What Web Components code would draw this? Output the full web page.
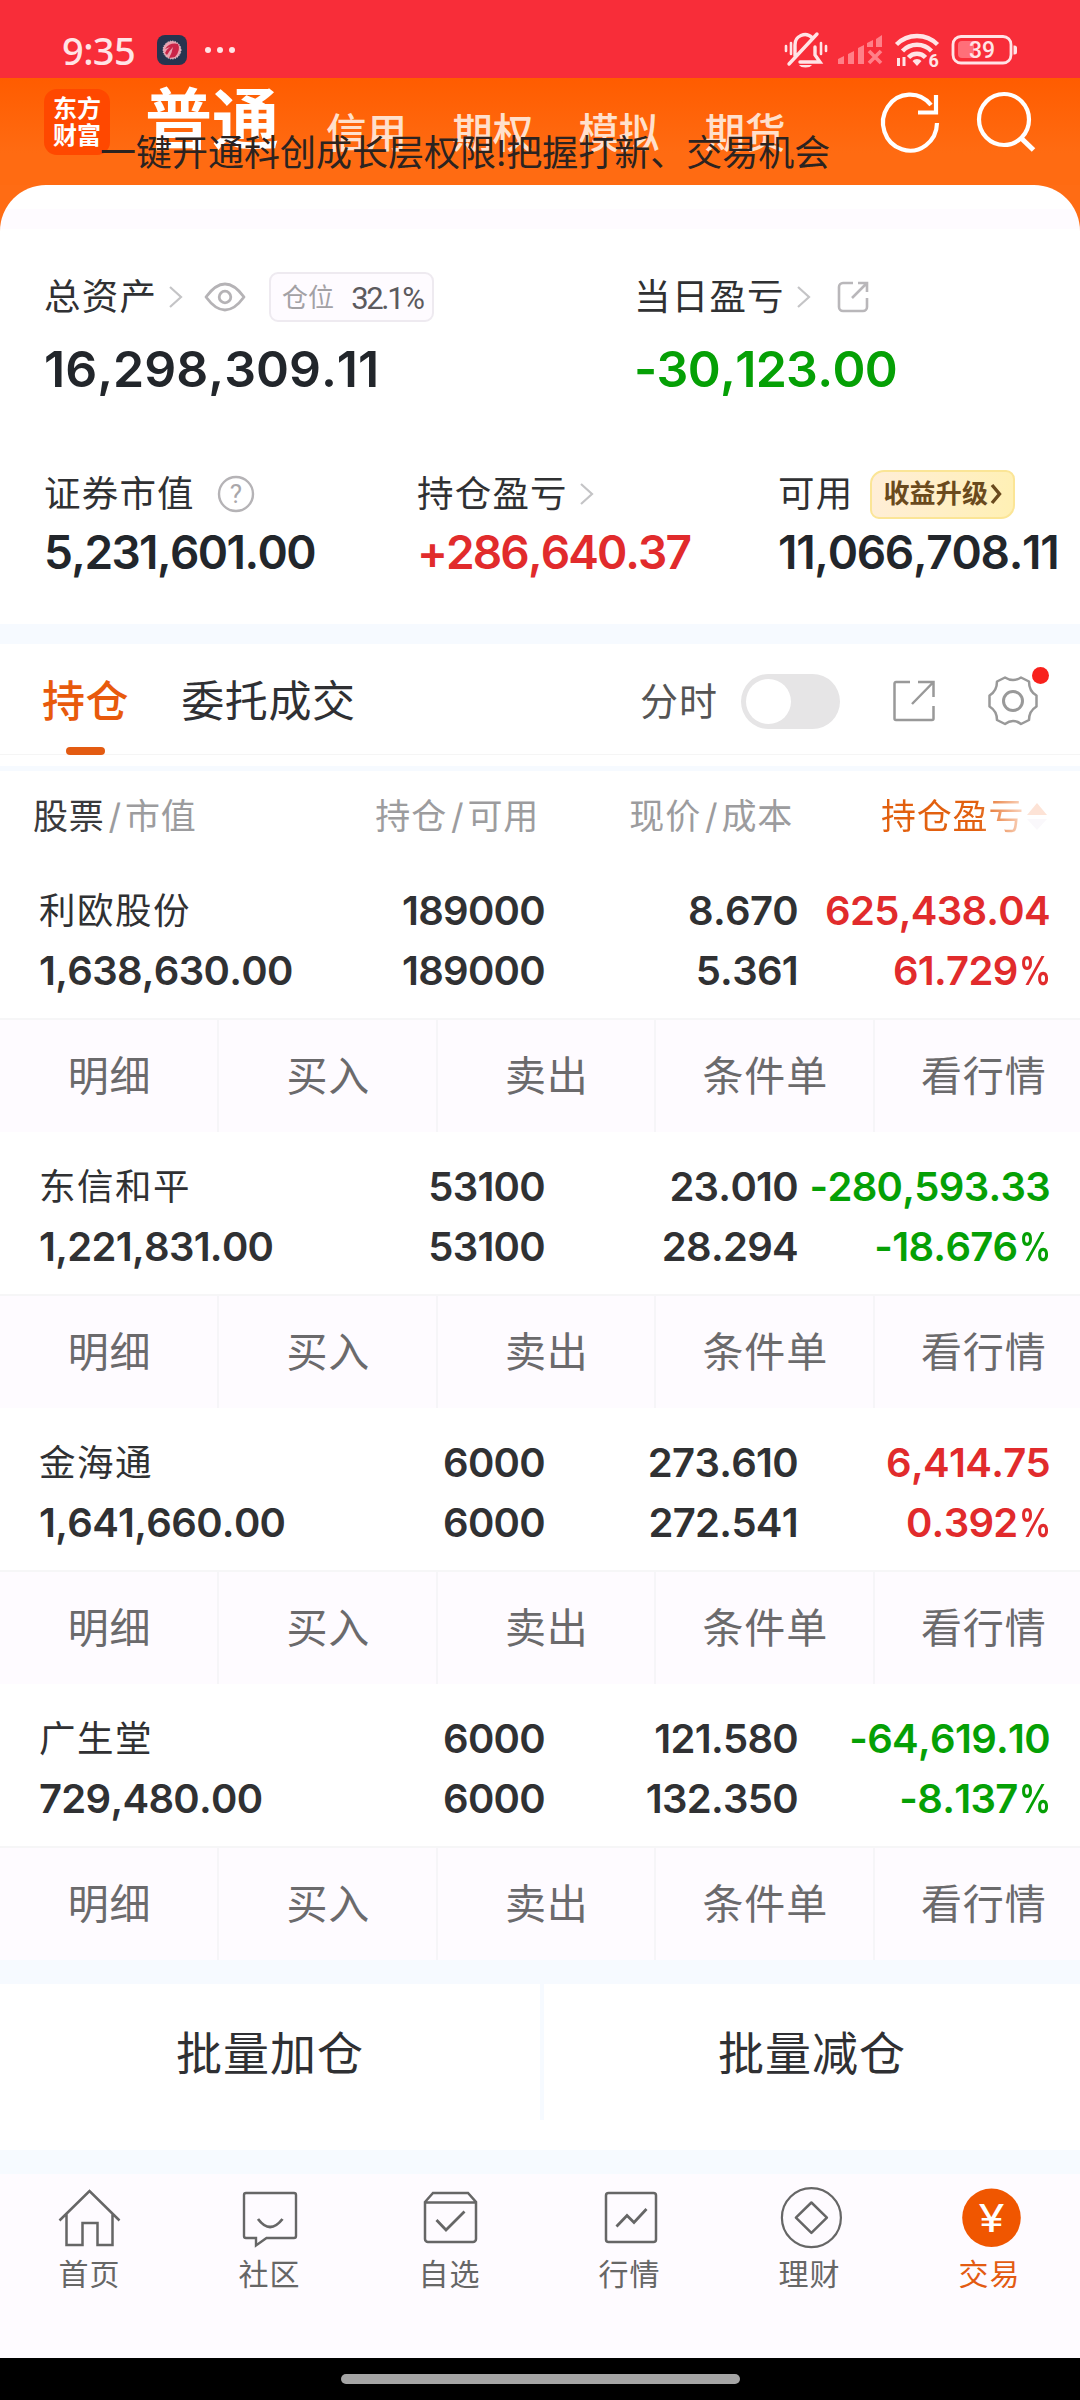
<!DOCTYPE html>
<html lang="zh-CN">
<head>
<meta charset="utf-8">
<title>交易</title>
<style>
  body {
    margin: 0;
    width: 1080px;
    height: 2400px;
    overflow: hidden;
    background: #fff;
    color: #2f3033;
    font-family: Inter, "Noto Sans CJK SC", sans-serif;
    line-height: 1;
  }
</style>
</head>
<body>
<trade-app></trade-app>

<script>
// every icon is drawn in its own viewBox, one unit per pixel
const ICONS = {
  mute: [44, 38, `<g fill="none" stroke="#ffe4e6" stroke-width="3.4" stroke-linecap="round">
    <path d="M11 25V14a10 10 0 0 1 17-7.500M31 16v8l5 7H16M5 33 33 3"/>
    <path d="M2 15v5M7 12v11M37 12v11M42 15v5" stroke-width="2.6"/></g>
    <path d="M15 34h13a7 4 0 0 1-13 0z" fill="#ffe4e6"/>`],
  signal: [46, 30, `<g fill="#ff8088"><path d="M1 29v-5l6-3v8zM11 29V19l6-3v13zM21 29V13l6-3v19zM30 12V8l6-3v7zM39 12V4l6-4v12z"/></g>
    <path d="M32 16 44 28M44 16 32 28" stroke="#ff8088" stroke-width="3.600"/>`],
  wifi: [44, 34, `<g fill="none" stroke="#ffe4e6" stroke-width="4.400">
    <path d="M1.500 11.500a29 29 0 0 1 41 0M7.500 18a20 20 0 0 1 29 0M13.500 24.500a11.500 11.500 0 0 1 17 0"/>
    <path d="M3.500 25v8M9 24v9" stroke-width="3"/></g>
    <path d="M17.500 28a6 6 0 0 1 9 0L22 33z" fill="#ffe4e6"/>
    <text x="33.500" y="33.500" font-size="18" font-weight="700" fill="#ffe4e6">6</text>`],
  battery: [68, 30, `<rect x="2" y="1.500" width="58" height="26.500" rx="8" fill="none" stroke="#ffe4e6" stroke-width="2.800"/>
    <path d="M11 6h12v17H11a4 4 0 0 1-4-4v-9a4 4 0 0 1 4-4z" fill="#ff6f79"/>
    <path d="M62.500 10.500h1a2.500 2.500 0 0 1 2.500 2.500v4a2.500 2.500 0 0 1-2.500 2.500h-1z" fill="#ffe4e6"/>
    <text x="31" y="22.500" font-size="23" font-weight="500" text-anchor="middle" fill="#ffe4e6">39</text>`],
  app: [30, 30, `<rect width="30" height="30" rx="8" fill="#26344f"/><circle cx="15" cy="15" r="9" fill="#e9a3b1" stroke="#f4dde4" stroke-width="1" stroke-dasharray="1 1.500"/>
    <path d="M8 14q5-7 13-5 3 6-3 13l-6 1q3-5 4-11-3 3-6 8l-2-2q2-4 5-6z" fill="#c92548"/>`],
  refresh: [60, 62, `<path d="M57 31A27 28 0 1 1 51 13M38 20.500H56V3" fill="none" stroke="#fff" stroke-width="4.200"/>`],
  search: [60, 62, `<ellipse cx="27" cy="27.500" rx="25" ry="25.500" fill="none" stroke="#fff" stroke-width="4.200"/><path d="m44 46 12.500 12" stroke="#fff" stroke-width="5"/>`],
  chevron: [16, 24, `<path d="m2 2 11 10L2 22" fill="none" stroke="#c4c4c6" stroke-width="2.200"/>`],
  more: [12, 22, `<path d="m2 2 7.500 9L2 20" fill="none" stroke="#6a4a1d" stroke-width="3.400"/>`],
  eye: [42, 30, `<g fill="none" stroke="#b5b3b6" stroke-width="2.800"><path d="M2 15Q21-11 40 15 21 41 2 15z" stroke-linejoin="round"/><circle cx="21" cy="15" r="5.800"/></g>`],
  help: [38, 38, `<circle cx="19" cy="19" r="17" fill="none" stroke="#b5b3b6" stroke-width="2.400"/>
    <text x="19" y="28" font-size="26" text-anchor="middle" fill="#a9a7aa">?</text>`],
  share: [34, 34, `<path d="M17 3H7a4 4 0 0 0-4 4v20a4 4 0 0 0 4 4h20a4 4 0 0 0 4-4V18M22 3h9v9M31 3 16 18" fill="none" stroke="#b9b7ba" stroke-width="2.600"/>`],
  export: [44, 44, `<path d="M18 3H4a1.500 1.500 0 0 0-1.500 1.500v35A1.500 1.500 0 0 0 4 41h36a1.500 1.500 0 0 0 1.500-1.500V27M26 3h15.500v15M41.500 3 20 25" fill="none" stroke="#999" stroke-width="2.500"/>`],
  gear: [52, 52, `<g fill="none" stroke="#999" stroke-width="2.500" stroke-linejoin="round">
    <path d="M18 2.500q8 5 16 0l8 4q0 10 7.500 14v11Q42 36 42 45l-8 4q-8-6-16 0l-8-4q0-9-7.500-13.500v-11Q10 16 10 6.500z"/><circle cx="26" cy="26" r="9.500" stroke-width="3"/></g>`],
  home: [64, 64, `<path d="M1.500 34.500 31.500 5l30 29.500M8.500 28v31h16V37h15v22h15V28" fill="none" stroke="#666" stroke-width="2.500"/>`],
  chat: [64, 64, `<path d="M8 7h48a2 2 0 0 1 2 2v41a2 2 0 0 1-2 2H28.500L18 59.500V52H8a2 2 0 0 1-2-2V9a2 2 0 0 1 2-2z" fill="none" stroke="#666" stroke-width="2.400"/>
    <path d="M20 33q12 16 24.500 0" fill="none" stroke="#666" stroke-width="2.800"/>`],
  watch: [64, 64, `<path d="M7 16 15 7h35l8 9v37a3 3 0 0 1-3 3H10a3 3 0 0 1-3-3zM7 16.500h51" fill="none" stroke="#666" stroke-width="2.500"/>
    <path d="m18.500 34 9.500 10 18.500-18.500" fill="none" stroke="#666" stroke-width="2.800"/>`],
  market: [64, 64, `<rect x="8" y="7" width="50" height="49" rx="2.500" fill="none" stroke="#666" stroke-width="2.500"/>
    <path d="m18.500 40.500 10.500-11 7 7 12.500-13.500" fill="none" stroke="#666" stroke-width="2.800"/>`],
  wealth: [64, 64, `<circle cx="33.400" cy="31.700" r="29.500" fill="none" stroke="#666" stroke-width="2.200"/>
    <path d="m33.400 16.500 15.500 15.200-15.500 15.200-15.500-15.200z" fill="none" stroke="#666" stroke-width="2.500" stroke-linejoin="round"/>`],
  trade: [64, 64, `<circle cx="33.500" cy="31.700" r="29.300" fill="#f05600"/>
    <text x="20.500" y="46" font-size="38" font-family="Inter" font-weight="400" textLength="26" lengthAdjust="spacingAndGlyphs" fill="#fff">¥</text>`]
};

const define = (name, render) => {
  customElements.define(name, class extends HTMLElement {
    constructor() {
      super();
      this.root = this.attachShadow({ mode: "open" });
    }

    connectedCallback() {
      this.root.innerHTML = render(this);
    }
  });
};

define("ui-icon", el => {
  const [w, h, body] = ICONS[el.getAttribute("name")];
  return `
    <style>
      :host { display: block; flex: none; width: ${w}px; height: ${h}px; }
      svg { display: block; font-family: Roboto, sans-serif; letter-spacing: 0; overflow: visible; }
    </style>
    <svg width="${w}" height="${h}" viewBox="0 0 ${w} ${h}">${body}</svg>`;
});

define("status-bar", () => `
  <style>
    :host {
      display: flex;
      align-items: center;
      box-sizing: border-box;
      height: 78px;
      padding: 21px 61px 0 62px;
      background: #f82d39;
      color: #ffe4e6;
    }
    .time { font: 500 38px/54px "Noto Sans", sans-serif; width: 95px; letter-spacing: -.6px; }
    .dots { display: flex; gap: 6px; margin-left: 18px; }
    .dots i { width: 6px; height: 6px; border-radius: 50%; background: #ffe4e6; }
    .right { display: flex; align-items: center; gap: 12px; margin-left: auto; }
    ui-icon[name=mute] { margin-right: -3px; }
  </style>
  <span class="time">9:35</span>
  <ui-icon name="app"></ui-icon>
  <div class="dots"><i></i><i></i><i></i></div>
  <div class="right">
    <ui-icon name="mute"></ui-icon>
    <ui-icon name="signal"></ui-icon>
    <ui-icon name="wifi"></ui-icon>
    <ui-icon name="battery"></ui-icon>
  </div>`);

define("app-header", () => `
  <style>
    :host {
      display: flex;
      position: relative;
      box-sizing: border-box;
      height: 107px;
      padding-left: 44px;
      background: linear-gradient(#ff5c00, #ff6b12 70%);
      color: #fff;
    }
    .logo {
      width: 66px;
      height: 66px;
      margin-top: 11px;
      border-radius: 13px;
      background: #ff4800;
      font: 700 24px/27px "Noto Sans CJK SC", sans-serif;
      text-align: center;
      box-sizing: border-box;
      padding-top: 4px;
    }
    .tabs { display: flex; align-items: flex-start; margin-left: 35px; color: #ffe0cc; }
    .tabs b { font-size: 67px; line-height: 84px; color: #fff; margin-right: 47px; }
    .tabs span { font-size: 40.500px; line-height: 60px; margin-top: 26px; font-weight: 500; margin-right: 45.200px; white-space: nowrap; }
    .tools { display: flex; gap: 37px; position: relative; margin: 14px 0 0 auto; padding-right: 43px; }
    .tip {
      position: absolute;
      left: 100px;
      top: 55px;
      font-size: 36px;
      line-height: 40px;
      color: #2c2320;
      white-space: nowrap;
    }
  </style>
  <div class="logo">东方<br>财富</div>
  <div class="tabs"><b>普通</b><span>信用</span><span>期权</span><span>模拟</span><span>期货</span></div>
  <div class="tools"><ui-icon name="refresh"></ui-icon><ui-icon name="search"></ui-icon></div>
  <div class="tip">一键开通科创成长层权限!把握打新、交易机会</div>`);

define("stat-item", el => `
  <style>
    :host { display: block; white-space: nowrap; }
    .label { display: flex; align-items: center; height: 50px; font-size: 36.500px; letter-spacing: 1.200px; color: #303133; }
    .value {
      font-size: var(--value-size);
      line-height: var(--value-line);
      font-weight: 600;
      font-kerning: none;
      letter-spacing: ${el.getAttribute("spacing") || 0}px;
      color: ${el.getAttribute("color") || "#22262b"};
    }
  </style>
  <div class="label"><slot></slot></div>
  <div class="value">${el.getAttribute("value")}</div>`);

define("account-summary", () => `
  <style>
    :host { display: block; background: #ff6c14; height: 439px; }
    .panel {
      box-sizing: border-box;
      height: 439px;
      padding: 87px 0 0 44px;
      border-radius: 46px 46px 0 0;
      background: linear-gradient(#fff 24px, #fefbff 24px, #fefbff 44px, #fff 44px);
    }
    .row { display: grid; }
    .total { grid-template-columns: 590px auto; --value-size: 50px; --value-line: 95px; }
    .parts { grid-template-columns: 373px 361px auto; margin-top: 52px; --value-size: 46px; --value-line: 66px; }
    .ratio {
      display: flex;
      align-items: center;
      box-sizing: border-box;
      width: 165px;
      height: 50px;
      margin-left: 23px;
      padding-left: 11px;
      border: 2px solid #eeeaf0;
      border-radius: 9px;
      background: #fefbff;
      font-size: 26px;
      line-height: 46px;
      padding-top: 2px;
      letter-spacing: 0;
      color: #a3a1a5;
    }
    .ratio b { font: 400 31px/46px Roboto; letter-spacing: -2.300px; color: #5c5a5e; margin: 2px 0 0 17px; }
    .upgrade {
      display: flex;
      align-items: center;
      box-sizing: border-box;
      width: 145px;
      height: 49px;
      margin-left: 17px;
      padding-left: 11px;
      border: 2px solid #fbe596;
      border-radius: 14px 9px;
      background: linear-gradient(100deg, #ffeed8, #fff0b4);
      font-size: 26px;
      font-weight: 700;
      letter-spacing: .2px;
      color: #6a4a1d;
    }
    .upgrade ui-icon { margin-left: 2px; }
    ui-icon[name=chevron] { margin-left: 11px; }
  </style>
  <div class="panel">
    <div class="row total">
      <stat-item value="16,298,309.11">总资产<ui-icon name="chevron"></ui-icon>
        <ui-icon name="eye" style="margin-left:20px"></ui-icon>
        <div class="ratio">仓位<b>32.1%</b></div>
      </stat-item>
      <stat-item value="-30,123.00" spacing="-.7" color="#05a005">当日盈亏<ui-icon name="chevron"></ui-icon>
        <ui-icon name="share" style="margin-left:24px"></ui-icon>
      </stat-item>
    </div>
    <div class="row parts">
      <stat-item value="5,231,601.00" spacing="-1.6">证券市值<ui-icon name="help" style="margin-left:22px"></ui-icon></stat-item>
      <stat-item value="+286,640.37" spacing="-1.9" color="#e12b2c">持仓盈亏<ui-icon name="chevron"></ui-icon></stat-item>
      <stat-item value="11,066,708.11" spacing="-1.3">可用<div class="upgrade">收益升级<ui-icon name="more"></ui-icon></div></stat-item>
    </div>
  </div>`);

define("holding-tabs", () => `
  <style>
    :host {
      display: flex;
      align-items: center;
      box-sizing: border-box;
      height: 147px;
      padding: 0 41px 8px 42px;
      border-top: 20px solid #f6faff;
      border-bottom: 5px solid #f6faff;
      font-size: 43px;
      letter-spacing: .6px;
      background: linear-gradient(#fff 110px, #f5f5f5 110px, #f5f5f5 111px, #fff 111px);
    }
    .on { position: relative; color: #e85a0c; font-weight: 500; margin-right: 52px; }
    .on::after {
      content: "";
      position: absolute;
      left: 24px;
      top: 67px;
      width: 39px;
      height: 8px;
      border-radius: 4px;
      background: #e35b12;
    }
    .time { margin-left: auto; font-size: 38px; letter-spacing: 1px; color: #555; }
    .switch { box-sizing: border-box; width: 99px; height: 55px; margin: 0 52px 0 23px; padding: 5px; border-radius: 28px; background: #e6e5e6; }
    .switch i { display: block; width: 45px; height: 45px; border-radius: 50%; background: #fff; }
    .gear { position: relative; margin-left: 51px; }
    .gear::after {
      content: "";
      position: absolute;
      left: 45px;
      top: -8px;
      width: 17px;
      height: 17px;
      border-radius: 50%;
      background: #f8211c;
    }
  </style>
  <span class="on">持仓</span><span>委托成交</span>
  <span class="time">分时</span>
  <div class="switch"><i></i></div>
  <ui-icon name="export"></ui-icon>
  <div class="gear"><ui-icon name="gear"></ui-icon></div>`);

define("holding-head", () => `
  <style>
    :host {
      display: grid;
      grid-template-columns: 266px 240px 254px 88px 172px;
      align-items: center;
      height: 90px;
      padding-left: 33px;
      font-size: 35px;
      letter-spacing: .8px;
      color: #9c9c9e;
      white-space: nowrap;
    }
    b { font-weight: 400; color: #3a3a3c; }
    i { font-style: normal; padding: 0 3px 0 4px; }
    .r { text-align: right; }
    .sort { grid-column: 5; display: flex; align-items: center; gap: 3px; }
    .sort span {
      color: transparent;
      background: linear-gradient(90deg, #e2600f 68%, #fbd9c6);
      -webkit-background-clip: text;
      background-clip: text;
      line-height: 44px;
    }
  </style>
  <div><b>股票</b><i>/</i>市值</div>
  <div class="r">持仓<i>/</i>可用</div>
  <div class="r">现价<i>/</i>成本</div>
  <div class="sort"><span>持仓盈亏</span>
    <svg width="20" height="27"><path d="M0 12 10 0l10 12z" fill="#fde3d6"/><path d="M0 16 10 27l10-11z" fill="#faf8fb"/></svg>
  </div>`);

define("holding-row", el => {
  const [name, worth, held, usable, price, cost, profit, rate] = el.getAttribute("data").split("|");
  const tone = profit.startsWith("-") ? "#05a005" : "#e12b2c";
  return `
    <style>
      :host { display: block; height: 271px; }
      .info {
        display: grid;
        grid-template-columns: 260px 246px 253px 252px;
        grid-template-rows: 60px 60px;
        box-sizing: border-box;
        height: 157px;
        padding: 20px 0 0 39px;
        font-size: 40px;
        line-height: 60px;
        font-weight: 600;
        font-kerning: none;
        letter-spacing: -.7px;
        color: #303133;
        white-space: nowrap;
      }
      .info span:not(.l) { text-align: right; }
      .info .name { font-size: 36.500px; font-weight: 400; letter-spacing: 1.500px; }
      .tone { color: ${tone}; }
      .tone i {
        display: inline-block;
        margin-left: -7px;
        font-style: normal;
        transform: scaleX(.8);
        transform-origin: 100% 50%;
      }
      .actions {
        display: grid;
        grid-template-columns: 219px repeat(4, 218.500px);
        box-sizing: border-box;
        height: 114px;
        overflow: hidden;
        border-top: 2px solid #f6f6f7;
        background: #fefbff;
        font-size: 41px;
        line-height: 113px;
        letter-spacing: .8px;
        text-indent: 2px;
        text-align: center;
        color: #6b6a6c;
      }
      .actions span { border-right: 2px solid #f6f5f8; }
    </style>
    <div class="info">
      <span class="l name">${name}</span><span>${held}</span><span>${price}</span><span class="tone">${profit}</span>
      <span class="l">${worth}</span><span>${usable}</span><span>${cost}</span><span class="tone">${rate.slice(0, -1)}<i>%</i></span>
    </div>
    <div class="actions"><span>明细</span><span>买入</span><span>卖出</span><span>条件单</span><span>看行情</span></div>`;
});

define("batch-actions", () => `
  <style>
    :host {
      display: grid;
      grid-template-columns: 540px 536px;
      column-gap: 4px;
      box-sizing: border-box;
      height: 214px;
      border-top: 24px solid #f6faff;
      border-bottom: 24px solid #f6faff;
      background: linear-gradient(#f6faff, #f6faff) 540px 0 / 4px 136px no-repeat;
      font-size: 46px;
      line-height: 138px;
      letter-spacing: 1px;
      text-align: center;
    }
    span:first-child { padding-right: 3px; }
  </style>
  <span>批量加仓</span><span>批量减仓</span>`);

define("nav-item", el => `
  <style>
    :host { display: flex; flex-direction: column; align-items: center; font-size: 30px; color: #666; }
    :host([active]) { color: #e35b12; }
    span { line-height: 40px; margin-top: 4px; letter-spacing: 1px; padding-right: 1px; }
  </style>
  <ui-icon name="${el.getAttribute("icon")}"></ui-icon>
  <span><slot></slot></span>`);

define("bottom-nav", () => `
  <style>
    :host {
      display: grid;
      grid-template-columns: repeat(6, 180px);
      box-sizing: border-box;
      height: 184px;
      padding-top: 12px;
      background: #fefbff;
    }
  </style>
  <nav-item icon="home">首页</nav-item>
  <nav-item icon="chat">社区</nav-item>
  <nav-item icon="watch">自选</nav-item>
  <nav-item icon="market">行情</nav-item>
  <nav-item icon="wealth">理财</nav-item>
  <nav-item icon="trade" active>交易</nav-item>`);

define("gesture-bar", () => `
  <style>
    :host { display: flex; justify-content: center; height: 42px; background: #000; }
    i { width: 399px; height: 10px; margin-top: 16px; border-radius: 5px; background: #a5a5a5; }
  </style>
  <i></i>`);

const HOLDINGS = [
  "利欧股份|1,638,630.00|189000|189000|8.670|5.361|625,438.04|61.729%",
  "东信和平|1,221,831.00|53100|53100|23.010|28.294|-280,593.33|-18.676%",
  "金海通|1,641,660.00|6000|6000|273.610|272.541|6,414.75|0.392%",
  "广生堂|729,480.00|6000|6000|121.580|132.350|-64,619.10|-8.137%"
];

define("trade-app", () => `
  <style>
    :host { display: block; }
    .rows { display: grid; row-gap: 5px; }
  </style>
  <status-bar></status-bar>
  <app-header></app-header>
  <account-summary></account-summary>
  <holding-tabs></holding-tabs>
  <holding-head></holding-head>
  <div class="rows">${HOLDINGS.map(data => `<holding-row data="${data}"></holding-row>`).join("")}</div>
  <batch-actions></batch-actions>
  <bottom-nav></bottom-nav>
  <gesture-bar></gesture-bar>`);
</script>
</body>
</html>
